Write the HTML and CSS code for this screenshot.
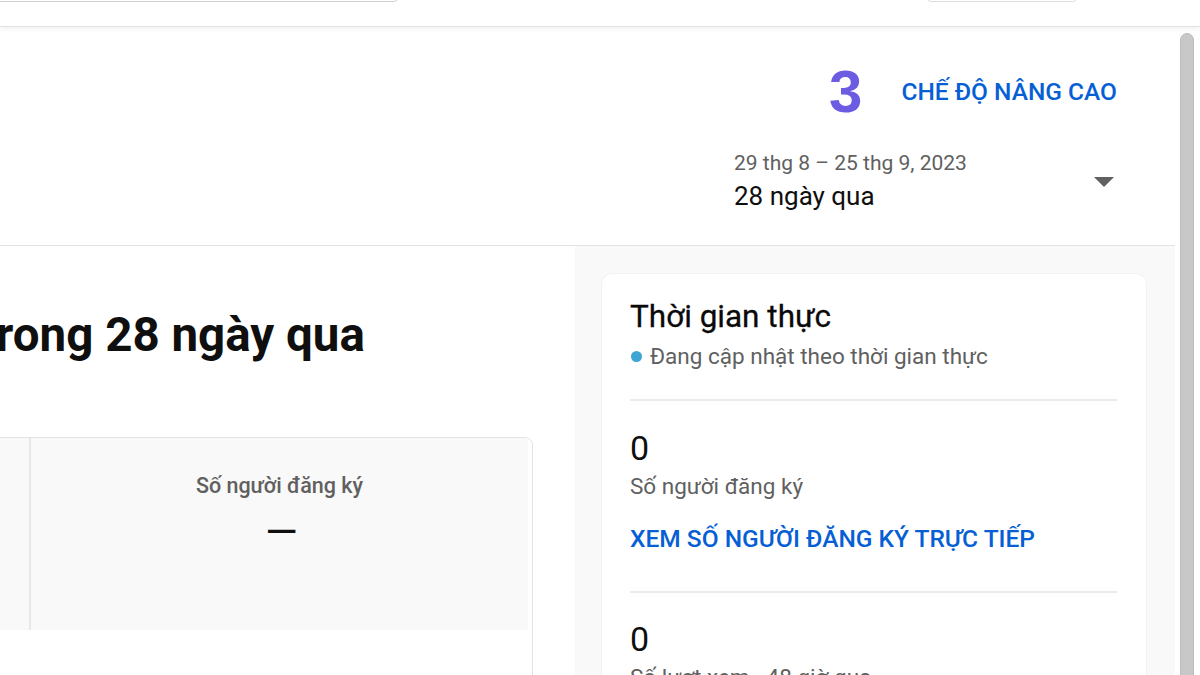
FILE: index.html
```html
<!DOCTYPE html>
<html lang="vi">
<head>
<meta charset="utf-8">
<title>Số liệu phân tích kênh</title>
<link rel="stylesheet" href="styles.css">
</head>
<body>
<div class="topbar">
  <div class="search"></div>
  <div class="pill"></div>
</div>
<div class="page">
  <div class="main">
    <header class="head">
      <div class="mode-row">
        <span class="step">3</span>
        <span class="mode">CHẾ ĐỘ NÂNG CAO</span>
      </div>
      <div class="picker">
        <div class="dates">
          <div class="range">29 thg 8 – 25 thg 9, 2023</div>
          <div class="period">28 ngày qua</div>
        </div>
        <svg class="caret" width="20" height="10" viewBox="0 0 20 10"><path d="M0 0h20L10 10z" fill="#606060"/></svg>
      </div>
    </header>
    <div class="content">
      <section class="left">
        <h1 class="headline">trong 28 ngày qua</h1>
        <div class="metrics">
          <div class="tiles">
            <div class="tile tile-first"></div>
            <div class="tile tile-sel">
              <div class="tile-label">Số người đăng ký</div>
              <div class="tile-value">—</div>
            </div>
          </div>
        </div>
      </section>
      <aside class="right">
        <div class="card">
          <div class="card-title">Thời gian thực</div>
          <div class="live"><span class="dot"></span>Đang cập nhật theo thời gian thực</div>
          <div class="rule"></div>
          <div class="num">0</div>
          <div class="sub">Số người đăng ký</div>
          <div class="link">XEM SỐ NGƯỜI ĐĂNG KÝ TRỰC TIẾP</div>
          <div class="rule rule2"></div>
          <div class="num num2">0</div>
          <div class="sub">Số lượt xem · 48 giờ qua</div>
        </div>
      </aside>
    </div>
  </div>
  <div class="scroll"><div class="thumb"></div></div>
</div>
</body>
</html>
```
FILE: styles.css
```css
html, body {
  margin: 0;
  padding: 0;
}
body {
  width: 1200px;
  height: 675px;
  overflow: hidden;
  background: #ffffff;
  font-family: Roboto, "Noto Sans", Arial, sans-serif;
  color: #0f0f0f;
}
.topbar {
  position: relative;
  z-index: 2;
  height: 26px;
  display: flex;
  background: #ffffff;
  border-bottom: 1px solid #e2e2e2;
  box-shadow: 0 2px 6px rgba(0, 0, 0, 0.06);
}
.search {
  width: 408px;
  height: 40px;
  margin-top: -38px;
  margin-left: -10px;
  border: 1px solid #cfcfcf;
  border-radius: 2px 4px 4px 2px;
  box-sizing: border-box;
}
.pill {
  width: 150px;
  height: 40px;
  margin-top: -38px;
  margin-left: auto;
  margin-right: 123px;
  border: 1px solid #dedede;
  border-radius: 4px;
  box-sizing: border-box;
}
.page {
  display: flex;
  height: 648px;
}
.main {
  width: 1175px;
  flex: 0 0 1175px;
  display: flex;
  flex-direction: column;
}
.head {
  flex: 0 0 auto;
  box-sizing: border-box;
  height: 219px;
  border-bottom: 1px solid #e3e3e3;
  display: flex;
  flex-direction: column;
  align-items: flex-end;
  padding: 35px 58px 0 0;
}
.mode-row {
  display: flex;
  align-items: center;
  height: 60px;
}
.step {
  font-family: "Liberation Sans", Arial, sans-serif;
  font-weight: 700;
  font-size: 60px;
  line-height: 60px;
  color: #6c5ce2;
  margin-right: 39px;
}
.mode {
  font-size: 24.5px;
  font-weight: 500;
  line-height: 30px;
  color: #065fd4;
}
.picker {
  margin-top: 28px;
  width: 383px;
  display: flex;
  align-items: center;
  justify-content: space-between;
}
.range {
  font-size: 21px;
  line-height: 26px;
  color: #606060;
}
.period {
  margin-top: 4px;
  font-size: 26px;
  line-height: 32px;
  color: #0f0f0f;
}
.caret {
  margin-right: 3px;
  margin-top: 2px;
}
.content {
  flex: 1 1 auto;
  display: flex;
  min-height: 0;
}
.left {
  width: 575px;
  flex: 0 0 575px;
  background: #ffffff;
}
.headline {
  margin: 61px 0 0 -20px;
  font-size: 47.5px;
  line-height: 56px;
  font-weight: 700;
  color: #0f0f0f;
  white-space: nowrap;
}
.metrics {
  margin: 74px 42px 0 -470px;
  height: 320px;
  border: 1px solid #e3e3e3;
  border-radius: 0 8px 0 0;
}
.tiles {
  display: flex;
  height: 192px;
  margin-right: 4px;
  background: #f9f9f9;
}
.tile-first {
  flex: 0 0 498px;
}
.tile-sel {
  flex: 1;
  border-left: 2px solid #e8e8e8;
  text-align: center;
  padding-top: 34px;
}
.tile-label {
  font-size: 21.5px;
  font-weight: 500;
  line-height: 28px;
  color: #606060;
}
.tile-value {
  margin-top: 11px;
  padding-left: 4px;
  font-size: 42px;
  line-height: 44px;
  color: #0f0f0f;
}
.right {
  flex: 1;
  background: #f9f9f9;
  padding: 28px 29px 0 27px;
}
.card {
  height: 500px;
  background: #ffffff;
  border-radius: 10px;
  box-shadow: 0 0 0 1px rgba(0, 0, 0, 0.025);
  padding: 23px 29px 0 28px;
}
.card-title {
  font-size: 31.5px;
  line-height: 40px;
  font-weight: 400;
  color: #0a0a0a;
  -webkit-text-stroke: 0.3px #0a0a0a;
}
.live {
  margin-top: 5px;
  display: flex;
  align-items: center;
  font-size: 22.5px;
  line-height: 28px;
  color: #606060;
}
.dot {
  width: 11px;
  height: 11px;
  border-radius: 50%;
  background: #3fa5d2;
  margin: 0 8px 0 1px;
}
.rule {
  margin-top: 29px;
  height: 2px;
  background: #ebebeb;
}
.rule2 {
  margin-top: 37px;
}
.num {
  margin-top: 27px;
  font-size: 34px;
  line-height: 40px;
  color: #0f0f0f;
}
.num2 {
  margin-top: 26px;
}
.sub {
  margin-top: 4px;
  font-size: 22.5px;
  line-height: 28px;
  color: #606060;
}
.link {
  margin-top: 24px;
  font-size: 24.5px;
  font-weight: 500;
  line-height: 30px;
  color: #065fd4;
}
.scroll {
  flex: 1;
  background: #ffffff;
  padding: 6px 5px 0 5px;
}
.thumb {
  width: 14px;
  height: 700px;
  background: #c8c8c8;
  border: 1px solid #bcbcbc;
  box-sizing: border-box;
  border-radius: 7px 7px 0 0;
}
```
